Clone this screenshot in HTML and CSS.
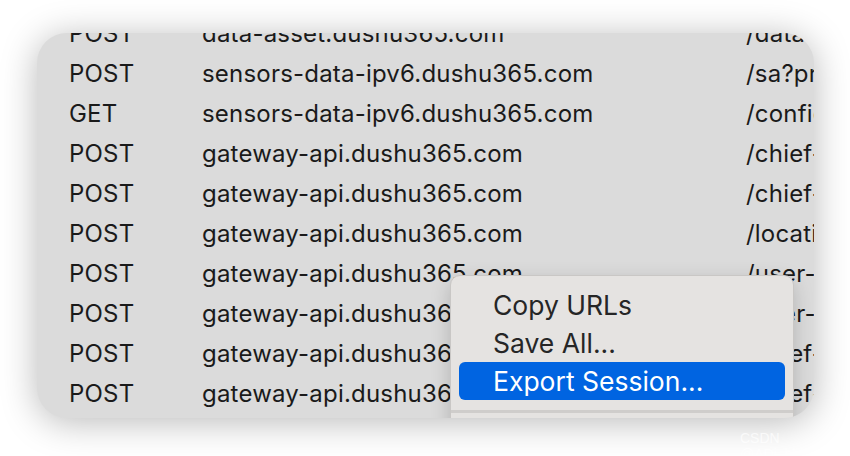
FILE: index.html
```html
<!DOCTYPE html>
<html>
<head>
<meta charset="utf-8">
<link rel="stylesheet" href="styles.css">
</head>
<body>
<div class="stage">
  <div class="window">
    <div class="list">
      <div class="row"><span class="method">POST</span><span class="host">data-asset.dushu365.com</span><span class="path">/data</span></div>
      <div class="row"><span class="method">POST</span><span class="host">sensors-data-ipv6.dushu365.com</span><span class="path">/sa?pr</span></div>
      <div class="row"><span class="method">GET</span><span class="host">sensors-data-ipv6.dushu365.com</span><span class="path">/config</span></div>
      <div class="row"><span class="method">POST</span><span class="host">gateway-api.dushu365.com</span><span class="path">/chief-</span></div>
      <div class="row"><span class="method">POST</span><span class="host">gateway-api.dushu365.com</span><span class="path">/chief-</span></div>
      <div class="row"><span class="method">POST</span><span class="host">gateway-api.dushu365.com</span><span class="path">/locati</span></div>
      <div class="row"><span class="method">POST</span><span class="host">gateway-api.dushu365.com</span><span class="path">/user-</span></div>
      <div class="row"><span class="method">POST</span><span class="host">gateway-api.dushu365.com</span><span class="path">/user-</span></div>
      <div class="row"><span class="method">POST</span><span class="host">gateway-api.dushu365.com</span><span class="path">/chief-</span></div>
      <div class="row"><span class="method">POST</span><span class="host">gateway-api.dushu365.com</span><span class="path">/chief-</span></div>
    </div>
    <div class="menu">
      <div class="item">Copy URLs</div>
      <div class="item">Save All...</div>
      <div class="item active">Export Session...</div>
      <div class="sep"></div>
    </div>
  </div>
  <div class="watermark">CSDN @ADi_hhh</div>
</div>
</body>
</html>
```

FILE: styles.css
```css
html, body {
  margin: 0;
  padding: 0;
  background: #ffffff;
}
.stage {
  position: relative;
  width: 850px;
  height: 456px;
  padding: 33px 0 0 37px;
  box-sizing: border-box;
  overflow: hidden;
}
.window {
  position: relative;
  width: 777px;
  height: 385px;
  border-radius: 30px;
  background: #dbdbdb;
  overflow: hidden;
  box-shadow: 0 4px 36px rgba(0, 0, 0, 0.28);
  font-family: "Inter", "Liberation Sans", sans-serif;
  color: #1a1a1a;
}
.list {
  margin-top: -20px;
  padding-left: 32px;
}
.row {
  display: flex;
  height: 40px;
  align-items: center;
  font-size: 24px;
  letter-spacing: 0.2px;
  white-space: nowrap;
}
.method {
  width: 133px;
  flex: none;
}
.host {
  width: 544px;
  flex: none;
}
.path {
  flex: none;
}
.menu {
  position: absolute;
  left: 413px;
  top: 242px;
  width: 344px;
  height: 200px;
  box-sizing: border-box;
  padding: 10px 8px 0;
  background: #e5e3e1;
  border: 1px solid #c9c7c5;
  border-radius: 10px;
  box-shadow: 0 6px 20px rgba(0, 0, 0, 0.18);
}
.item {
  height: 38px;
  display: flex;
  align-items: center;
  padding-left: 34px;
  border-radius: 6px;
  font-size: 26.5px;
  color: #262626;
}
.item.active {
  background: #0064e1;
  color: #ffffff;
}
.sep {
  height: 3px;
  margin: 10px -8px 0;
  background: #cfcdcb;
}
.watermark {
  position: absolute;
  left: 740px;
  top: 430px;
  font-family: "Liberation Sans", sans-serif;
  font-size: 14px;
  color: rgba(255, 255, 255, 0.7);
}
```
